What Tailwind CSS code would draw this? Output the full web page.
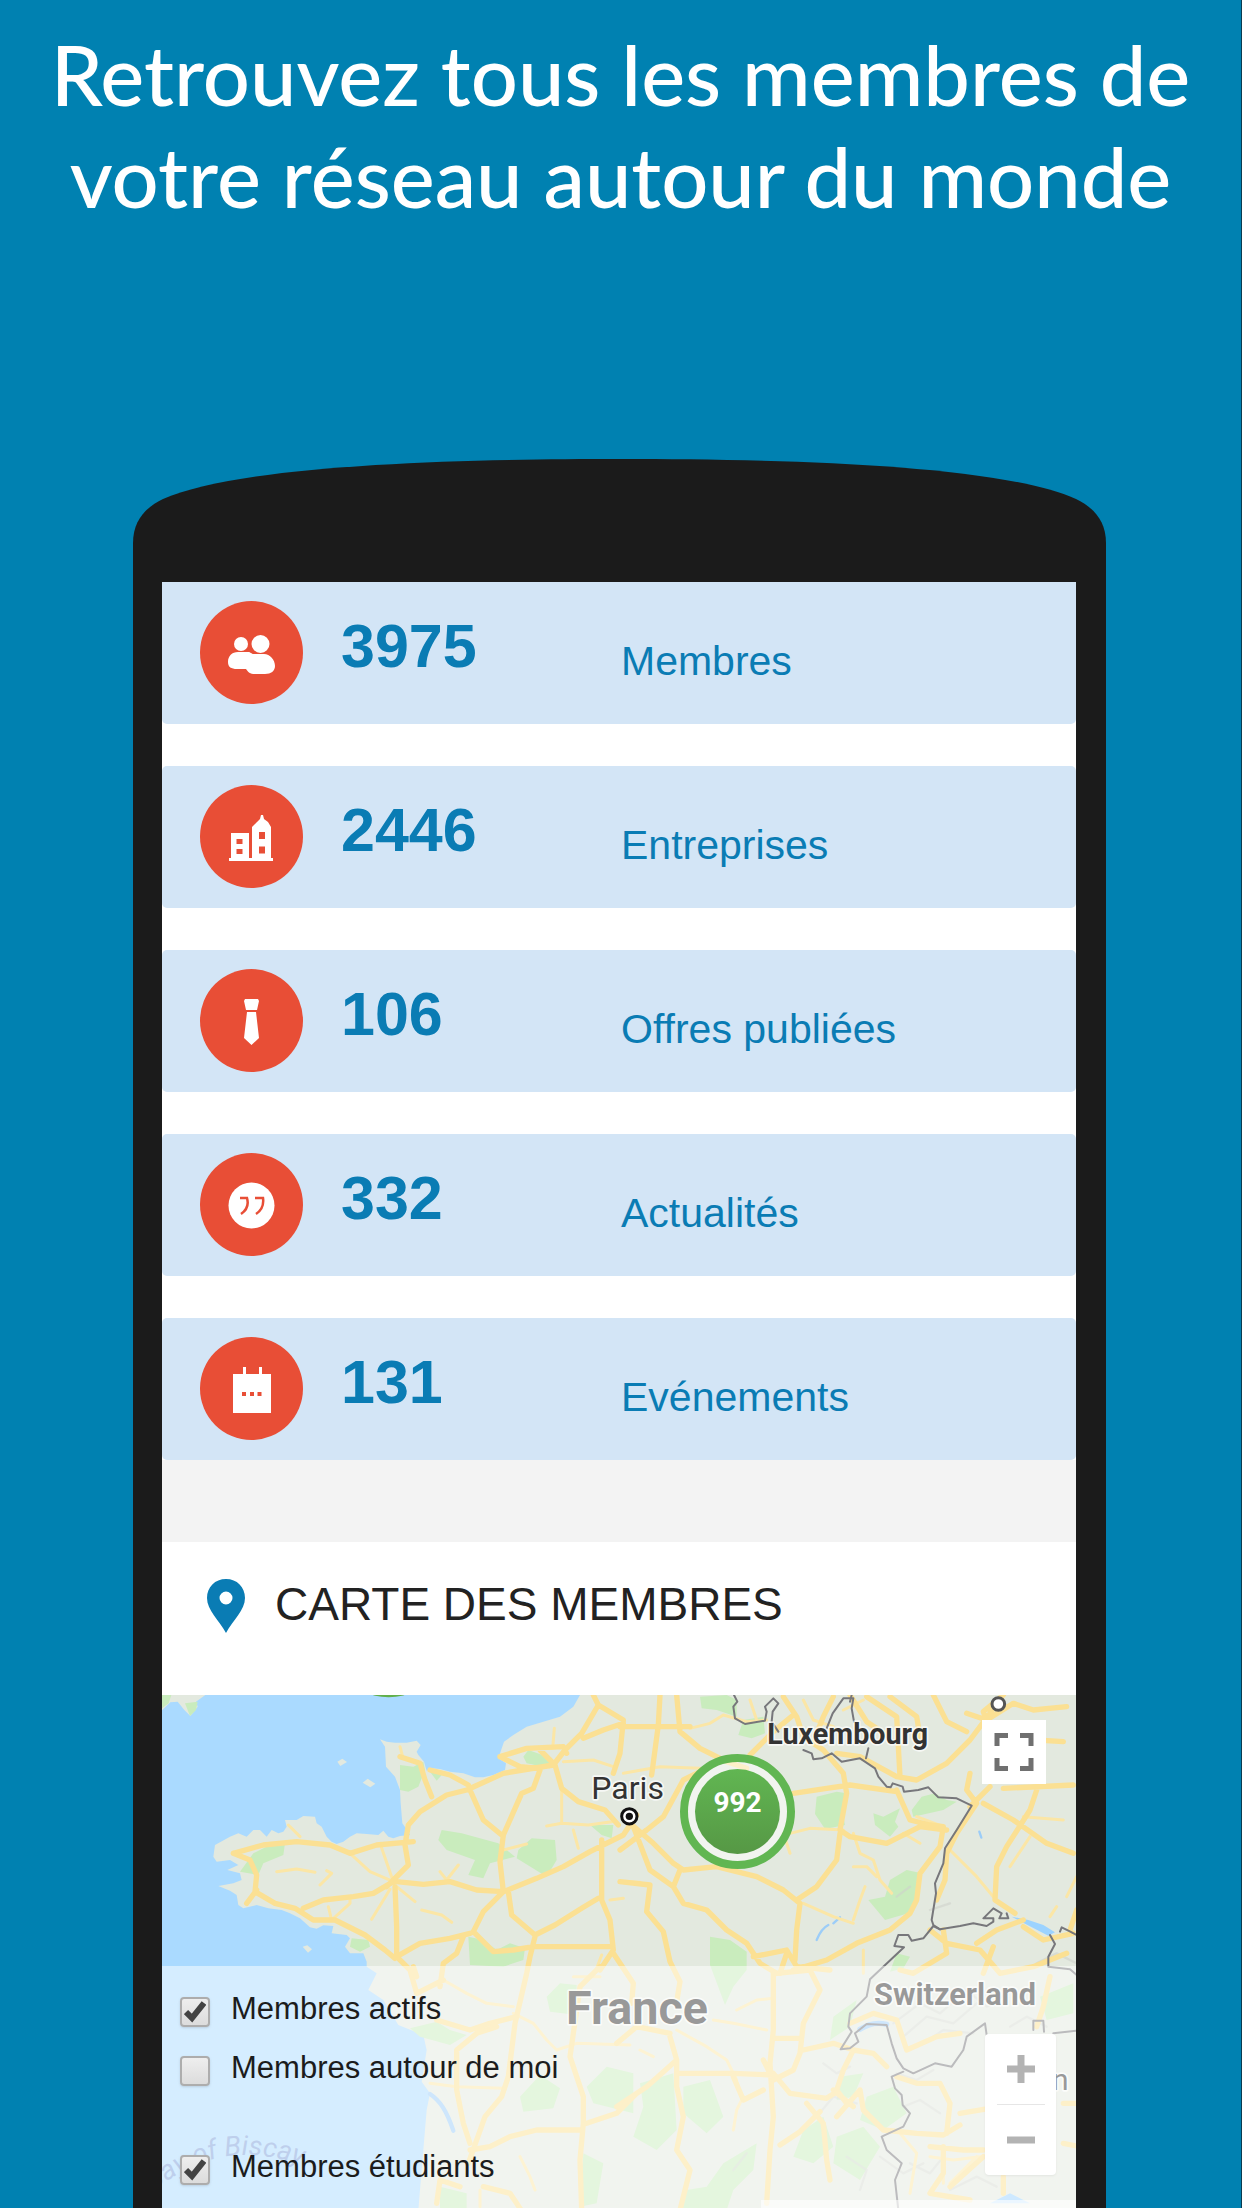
<!DOCTYPE html>
<html lang="fr">
<head>
<meta charset="utf-8">
<meta name="viewport" content="width=device-width, initial-scale=1">
<title>Réseau – Carte des membres</title>
<script src="https://cdn.jsdelivr.net/npm/@tailwindcss/browser@4"></script>
</head>
<body class="min-h-screen overflow-x-hidden border-r border-[#0b3c50] bg-[#0081b1] font-['Liberation_Sans',Arial,sans-serif]">
<header class="px-8 pt-[23px]">
  <h1 class="text-center font-['Lato',sans-serif] text-[83px] leading-[102px] font-medium text-white">Retrouvez tous les membres de<br>votre réseau autour du monde</h1>
</header>

<main class="mt-[232px] mr-[135px] ml-[133px]">
  <svg class="block h-[123px] w-full" viewBox="0 0 973 123" preserveAspectRatio="none" aria-hidden="true">
    <path fill="#1b1b1b" d="M0 124V84C0 60 15 47 30 40C110 5 330 0 487 0C645 0 865 5 943 40C958 47 973 60 973 84V124Z"/>
  </svg>
  <div class="bg-[#1b1b1b] pr-[30px] pl-[29px]">
    <div class="bg-white">

      <ul class="flex flex-col gap-[42px] text-[#0a7cb4]">
        <li class="flex h-[142px] items-start rounded-b-[5px] bg-[#d3e5f6] pl-[38px]">
          <svg class="mt-[19px] size-[103px] shrink-0" viewBox="0 0 103 103" aria-hidden="true">
            <circle cx="51.500" cy="51.500" r="51.500" fill="#e84e36"/>
            <g fill="#fff"><circle cx="41" cy="43" r="7"/><circle cx="60.500" cy="43" r="9"/>
            <path d="M38 51h10c3 0 3 2 6 2h10c6 0 11 6 11 12 0 5-4 8-10 8H55c-5 0-7-2-9-5h-9c-6 0-9-2-9-7 0-6 4-10 10-10z"/></g>
          </svg>
          <strong class="ml-[38px] w-[280px] shrink-0 pt-[34px] text-[61px] leading-none font-bold">3975</strong>
          <span class="pt-[59px] text-[41px] leading-none">Membres</span>
        </li>
        <li class="flex h-[142px] items-start rounded-[5px] bg-[#d3e5f6] pl-[38px]">
          <svg class="mt-[19px] size-[103px] shrink-0" viewBox="0 0 103 103" aria-hidden="true">
            <circle cx="51.500" cy="51.500" r="51.500" fill="#e84e36"/>
            <path fill="#fff" d="M29 73h2V48h18v25h3V42l5-5 3-3 1-4h2l1 4 4 3 3 5v31h2v3H29z"/>
            <path fill="#e84e36" d="M36.500 54h6v5h-6zM36.500 64h6v5h-6zM59 47h6v7h-6zM59 61.500h6v7h-6z"/>
          </svg>
          <strong class="ml-[38px] w-[280px] shrink-0 pt-[34px] text-[61px] leading-none font-bold">2446</strong>
          <span class="pt-[59px] text-[41px] leading-none">Entreprises</span>
        </li>
        <li class="flex h-[142px] items-start rounded-[5px] bg-[#d3e5f6] pl-[38px]">
          <svg class="mt-[19px] size-[103px] shrink-0" viewBox="0 0 103 103" aria-hidden="true">
            <circle cx="51.500" cy="51.500" r="51.500" fill="#e84e36"/>
            <path fill="#fff" d="M45 30h13l1 2-2 9H46l-2-9zM47 43h9l3 26-7.500 7-7.500-7z"/>
          </svg>
          <strong class="ml-[38px] w-[280px] shrink-0 pt-[34px] text-[61px] leading-none font-bold">106</strong>
          <span class="pt-[59px] text-[41px] leading-none">Offres publiées</span>
        </li>
        <li class="flex h-[142px] items-start rounded-[5px] bg-[#d3e5f6] pl-[38px]">
          <svg class="mt-[19px] size-[103px] shrink-0" viewBox="0 0 103 103" aria-hidden="true">
            <circle cx="51.500" cy="51.500" r="51.500" fill="#e84e36"/>
            <circle cx="51.500" cy="52.500" r="23" fill="#fff"/>
            <path fill="none" stroke="#e84e36" stroke-width="2.500" d="M40 45h7c2 7 0 12-6 16M55 45h8c1 7-1 12-7 16"/>
          </svg>
          <strong class="ml-[38px] w-[280px] shrink-0 pt-[34px] text-[61px] leading-none font-bold">332</strong>
          <span class="pt-[59px] text-[41px] leading-none">Actualités</span>
        </li>
        <li class="flex h-[142px] items-start rounded-[5px] bg-[#d3e5f6] pl-[38px]">
          <svg class="mt-[19px] size-[103px] shrink-0" viewBox="0 0 103 103" aria-hidden="true">
            <circle cx="51.500" cy="51.500" r="51.500" fill="#e84e36"/>
            <path fill="#fff" d="M33 37h10v-7h3v7h13v-7h3v7h9v39H33z"/>
            <path fill="#e84e36" d="M42 55h4v4h-4zM50 55h4v4h-4zM57.500 55h4v4h-4z"/>
          </svg>
          <strong class="ml-[38px] w-[280px] shrink-0 pt-[34px] text-[61px] leading-none font-bold">131</strong>
          <span class="pt-[59px] text-[41px] leading-none">Evénements</span>
        </li>
      </ul>

      <div class="h-[82px] bg-[#f3f3f3]"></div>

      <div class="flex h-[153px] items-start pt-[37px] pl-[45px]">
        <svg class="h-[54px] w-[38px] shrink-0" viewBox="0 0 38 54" aria-hidden="true">
          <path fill="#0a7cb4" fill-rule="evenodd" d="M19 0C8 0 0 8 0 19c0 12 12 22 19 35 7-13 19-23 19-35C38 8 30 0 19 0zm0 12.500a6.500 6.500 0 1 1 0 13 6.500 6.500 0 0 1 0-13z"/>
        </svg>
        <h2 class="ml-[30px] pt-[2px] text-[46px] leading-none text-[#222]">CARTE DES MEMBRES</h2>
      </div>

      <section class="relative h-[513px] overflow-hidden bg-[#aadaff]" aria-label="Carte des membres">
        <svg class="absolute inset-0 h-full w-full" viewBox="0 0 2742 1539" preserveAspectRatio="xMidYMin slice" aria-hidden="true">
          <g transform="translate(-36 -15)" stroke-linejoin="round" stroke-linecap="round">
            <!-- land -->
            <path fill="#e3e9df" d="M1290 15 1270 50 1230 80 1180 95 1130 110 1090 135 1062 155 1045 205 1068 220 1065 240 1030 255 1000 262 975 262 940 250 900 245 870 237 845 235 830 242 822 215 805 195 800 185 812 165 800 152 770 158 735 158 710 155 690 148 705 170 708 230 735 260 750 300 752 340 757 400 775 425 780 435 750 438 730 445 715 440 700 422 685 435 650 432 620 430 600 440 580 455 560 462 545 455 530 440 515 410 500 400 495 380 460 378 440 390 405 390 410 410 400 425 385 430 365 420 350 440 330 420 310 420 290 440 265 430 240 440 195 465 190 500 200 515 240 510 265 525 232 540 270 550 275 570 250 580 205 588 240 602 260 615 265 645 280 655 320 645 355 655 395 660 420 670 450 685 480 712 500 716 520 706 550 708 545 730 590 735 600 745 585 770 600 790 640 790 650 815 650 830 680 850 655 900 700 930 745 1005 820 1035 830 1080 815 1175 840 1210 830 1260 820 1380 805 1560H2900V0H1290z"/>
            <path fill="#e3e9df" d="M36 15h130l-28 20 5 15-22 28-18-18-20-25-22 2-25 24zM562 215l15-9 14 10-20 12zM638 278l15-12 23 15-15 11zM458 770l14-4 14 12-12 10z"/>
            <!-- vegetation -->
            <g fill="#c9ecbd">
              <path d="M36 15h28l-8 25-20 15zM105 40l38-5-5 25-18 18zM750 225l40 5 30-15 5 25-20 50-30 15-25-5zM1135 180l70 25-5 30-70-15-10-20zM875 420l60 10 110 30 50 40-75 20-20 45-45-10 20-45-85-30-25-30zM1105 480l40-35 70 5 5 60-30 50-90-55zM310 490l60-30h35l-5 35-60 25-15 35-55-10zM605 745l50 5 5 20-30 15-30-15zM955 740l45 10 40 30 40-20 45 15-5 35-60 20-100-5zM1320 405h70l-5 40-30-10zM840 245l40 5-20 22z"/>
              <path d="M1650 20l80-5 30 15v50l-60-20-45-5zM1780 90l60-10 5 50-40 15-40-10zM2000 320l60-15 30 5-10 70 5 25-60 12-30-45zM2285 360l30-40 40-10 35 20 30 5-40 25-90 20zM2170 370l30 10 50-25-15 40 10 15-25 30-45-35zM2220 570l50-30 45 10-15 65-25 55-70 20-50-60 50-10zM1680 740l60 10 50 35v55l-40 50-25 55-45-120zM2240 790l40 10-20 35-40 10z"/>
              <path d="M780 1015l80-20 40 25 50 15-50 30-90-25zM1190 920l40-40 50 5v90l-80-10zM1110 1220l60-65 60 40-20 60-90 10zM1310 1190l60-60 80 20v120l-120-30zM870 1490l80 20v45h-80zM1300 1390l60 30-20 120-50 10z"/>
              <path d="M1470 1180l100-30 10 170-60 60-70-40 30-90zM1600 1190l80-20 40 110-50 50-70-60zM2050 980l70-50-20 80-60 40zM1960 1320l60-40 30 90-60 50-60-20zM2060 1340l80-30 50 60-60 100-80-50zM2150 1220l80-30 40 80-70 50-70-30zM1720 1420l100-60-10 80-60 60-20 60h-140l20-60 60-10zM2670 920l100-40v90l-80 20zM2070 1160l70-10-30 70-50 10z"/>
            </g>
            <!-- relief -->
            <g fill="none" stroke="#cfd2cc" stroke-width="7" opacity=".6">
              <path d="M2230 1000l80-60 60 30 80-70 60 50 60-40M2260 1040l70-60 80 20 70-60M2320 1060l60-40 90 10M2000 1280l50-60 70 20M2090 1400l60 40-20 60M2190 1400l70 50 60-30M2240 1150l60 20 50-30M2260 1250l50-20 60 40M1750 1440l40-50M2580 1010l50-30 60 30M2400 1500l80-40 60 30M2280 1420l60 30 40-50M2100 1130l-40 20-40-30M2660 820l60-30 60 30M2240 620l40-30M2340 660l60-20"/>
            </g>
            <!-- water -->
            <g fill="none" stroke="#9ccdf8" stroke-width="7"><path d="M840 1212c30 20 50 50 70 110" stroke-width="13"/><path d="M2000 750c10-25 25-40 35-45M2050 700l20-18M2488 425l6 18"/><path d="M2130 1018c30-20 60-20 80-15" stroke-width="16"/></g>
            <path fill="#9cd3ff" d="M2585 680l50 10 45 15 35 22-20 10-35-18zM2520 1540l60-30 60 30z"/>
            <!-- minor roads -->
            <g fill="none" stroke="#fbe6a6" stroke-width="9">
              <path d="M1213 115l-5 60M1240 215l90-5 60 20M1235 290v110l-45 8M1235 400l80 5 70-10M1270 420l15 55M1060 480l70-18M870 545l20 25 35-45M380 545l60-8 55 10M510 585l35-35-15-8M815 660l60 15 30 22M690 460l40 115M600 490l60 55 70 30M535 650l10 40 55-50v-15M1410 575l60 2M1380 630l40-5M665 688l55-90M740 590l55 45M415 405l35 35M1340 835l15-40M750 170l8 30 45 20"/>
              <path d="M1420 250l110-20 120 5M1620 115l60-15 40-25 70 20 60-5M1800 30l20 60M1960 30l30 60 60 20M1900 430l20 60M1920 430l60-15 100 5M2110 430l20 60 40 20 20 60 35 40M2180 560l-30-30-40 0M1960 640l90 40 60 20M2110 690l20-60 15-40M2260 430l50 30M2400 480l80 80 50 60M2580 530l60-90M2620 380l120 10M2750 620l30-60M2080 60l60-30M2300 380l80 30M2700 680l20-30"/>
              <path d="M880 870l70 40 60 30 80 10M1090 970l60 30 40 50 30 30 60-20 160 5M840 1180l80 10 140 5M1110 1400l30 60 15 40M990 1500v50M1270 860l80 0M1690 990l60 10 100 20M1760 960l60-30 50-5M1580 1020l90 50 60 40 30 60M1510 1100l-40-20M2140 850v-70M1750 1320l10-60 20-40M2250 1330l50 60-20 120M2340 1400l70 10 80-10M2380 1400v80M2480 1400l-80 80"/>
            </g>
            <!-- main roads -->
            <g fill="none" stroke="#fbe093" stroke-width="16">
              <path d="M1330 15l15 30 75 45-10 100-20 60M1345 45l-50 85-50 50-35 45-150 25-110 50-60 15-80 50-35 40-10 60 10 60-65 65M1420 100l-60 20-60 25M1050 200l80-25 110-5 10 20M1050 200l60 30 60 5M1170 180l45 45 20 70 50 40 80 25 40 45M1170 240l-20 55-35 15-55 125-10 80 10 90M960 300l40 90 55 45M840 240l60 15 55 30M750 200l60 20 15 50 20 50M250 490l90-25 100-10 100 10 60 25 80-25 110-10M250 490l50 20 20 45-5 50 60 35 60 15 55 35h65l90 45 60 45 30 25M290 640l30-40M730 575l-60 35-60 10-90 10-60 25M740 575l80 8 80-8 80 25 80 5 100-40 80-35 80-45 100-50 40-60M735 590l5 120v90M740 800l70-40 90-15 60-15M1060 605l-60 60-30 60 60 60 60-5 60-10 235 0M1075 605l10 70 70 60 60-30 80-50 50-30M1355 450v180l25 60 10 90-40 60M1155 740l-15 60-10 50-35 150-20 160-20 60-50 60-50 140M940 740l-20 50-40 30-10 70M740 800l40 40 20 70 80-40M1390 790l40 60 20 30-5 60"/>
              <path d="M1410 110h210M1530 15l-5 90-20 150M1580 15l10 110 60 50 80 40 60 20M1410 480l80-60 50-40 60-110 80-40M1450 410l50 130 70 50 30 50 70 20 60 60 60 40 40 60 50 30M1410 575l90 10-10 80 50 60 20 90 30 60-10 60M1440 400l70 60 60 60 30 20 100-10 120 30 80 40 50 40-10 80-5 90M1590 540l-20 50M1800 195l70-70 60-50M1930 310l100-15 70-10 140 20M1900 20l40 60 20 60 60 40 60 70 10 60-20 110 30 20 110 20 100-50 80 10M2070 430l-10 80-60 80-60 40M2060 190l70 10 110 60 60 10 90-50 70-70 60-80 40-60M2050 20l-30 60-20 50M2150 20l90 60 10 180M2100 15l50 80 60 40M2220 20l80 60 10 60M2350 15l40 80 60 30M2560 15l-60 50 20 60 60 20 160 10M2450 70l60 20 80-50 60 20 100-10M2460 250l-10 50 30 40-60 90-30 60-5 80-25 60M2240 300l40 90 60 15 40 5-10 60-60 80-10 80-20 40-60 50-100 40-90 50-100 30M2500 340l90 50 100 70 80 30M2520 290l-60 60M2660 300l-20 60-70 110-30 60-5 100 60 40M2560 295l210-10M2340 720l50 40 100 20 60 70 100-20 100-40M2380 720l10 70-100 60-40-10M2480 760l60-40 80-30M2500 850l30-80M2780 660l-20 60M1810 800l100-20 30 50 100 10M1910 790l-20 60M2620 710l60 40 90-20"/>
              <path d="M1560 1030l-100-20-60 50M1560 1040l20 70 0 80 20 90-20 100 40 60-30 120M1400 1250l90-60 90-80M1590 1150h160l120 5M1870 850l0 170-10 100 10 160-10 100-10 160M1880 850l100-10 30 60-50 100-10 90-20 50-60 30-30-60M1870 1045h80M1870 1150l50 60 110 15 30-20M1960 1080l90-20 60 20 60 10 40 40M2110 1080l-30 60-20 60 30 40M2110 1250l-60-50M1970 1240l50 60 10 110 10 60M1890 1365l60-40 60-60M2060 1280l70-80M2130 1200l10 60 60 60 100 10 80 5 50-30M2100 1000l70-30 70 20 30 90 90-40 70-10M2240 1160l60 20 70 0 30 60-10 90M2340 1370l100 10 60 0M2380 1370v80l-40 60 120 20M2430 1270l120-20M2500 1400l-100 90M2560 1460v50M2700 860l-20 90-20 60M2780 1240l-40 0M2740 1360l50 10M1750 1160l30 70 60-30M1040 1010l-60 20-60 50v120l20 100 20 60M960 1380l60-10 60-30 80-20h130M1270 1030l-10 70 40 120 0 80-10 110 5 150M1350 830l-60 60-20 140M1310 1300l90-30 60-60M930 1490l-60-20-10 70M1000 1490l80 20 40 60M800 860l-10-30M860 990l100 30 60-20 80-20"/>
            </g>
            <!-- borders -->
            <g fill="none" stroke="#77777b" stroke-width="6">
              <path d="M1752 15L1762 35 1750 50 1755 85 1785 102 1845 92 1850 65 1845 50 1870 25 1885 40 1868 65 1865 95 1885 125M2030 115L2048 70 2080 25 2110 25 2105 55 2112 95M2105 15L2100 35M2155 175L2148 205"/>
              <path d="M1960 180L1985 190 1990 208 2015 205 2045 190 2075 215 2130 205 2175 235 2185 260 2210 290 2222 292 2228 280 2258 290 2262 305 2305 300 2335 292 2365 322 2420 325 2465 347 2420 420 2385 475 2380 520 2355 580 2358 610 2345 690 2350 705 2370 718 2430 708 2470 700 2510 708 2530 695 2530 685 2500 685 2530 655 2555 670 2548 685 2575 685 2570 670"/>
              <path d="M2370 718L2350 708 2320 745 2285 752 2275 735 2245 735 2233 768 2262 772 2160 868 2150 920 2100 970 2095 1010 2105 1025 2072 1078 2100 1075 2125 1055 2115 1030 2150 1002 2210 1005 2225 1060 2240 1105 2260 1135 2290 1150 2355 1120 2405 1130 2440 1080 2450 1040 2505 1000 2510 1035"/>
              <path d="M2260 1145L2225 1160 2235 1195 2255 1215 2258 1245 2280 1270 2260 1310 2195 1340 2210 1380 2255 1420 2235 1470 2245 1560M2730 725L2735 712 2755 722 2780 735M2700 735L2715 762 2695 800 2695 830 2760 838 2780 855M2650 1020L2650 992 2680 992 2682 1025M2710 1030L2780 1022"/>
            </g>
            <!-- towns -->
            <circle cx="1438" cy="379" r="23" fill="#fff" stroke="#111" stroke-width="9"/><circle cx="1438" cy="379" r="11" fill="#111"/>
            <circle cx="2545" cy="42" r="19" fill="#fff" stroke="#555" stroke-width="9"/>
            <ellipse cx="716" cy="7" rx="56" ry="15" fill="#61b04c"/>
            <!-- labels -->
            <g font-family="Roboto, sans-serif" paint-order="stroke" stroke="#fff" stroke-opacity=".7" stroke-width="10" fill="#333">
              <text x="1324" y="328" font-size="96">Paris</text>
              <text x="1852" y="163" font-size="86" font-weight="700">Luxembourg</text>
              <text x="1248" y="1002" font-size="140" font-weight="700">France</text>
              <text x="2172" y="944" font-size="92" font-weight="700">Switzerland</text>
              <text x="2706" y="1200" font-size="90">n</text>
            </g>
            <path id="bay" fill="none" d="M10 1505Q240 1310 530 1460"/>
            <text font-family="Roboto, sans-serif" font-size="82" font-style="italic" fill="#7d9fd8"><textPath href="#bay">Bay of Biscay</textPath></text>
          </g>
        </svg>

        <button type="button" aria-label="992 membres" class="absolute top-[59px] left-[518px] flex size-[115px] items-center justify-center rounded-full border-8 border-[#61b652] bg-white/50 p-[7px]">
          <span class="flex size-full justify-center rounded-full bg-linear-to-b from-[#61b652] to-[#569845] pt-[14px] font-['Roboto',sans-serif] text-[28px] leading-10 font-bold text-white">992</span>
        </button>

        <button type="button" aria-label="Plein écran" class="absolute top-[25px] right-[30px] flex size-16 items-center justify-center bg-white">
          <svg class="size-10" viewBox="0 0 40 40" fill="none" stroke="#707070" stroke-width="5" aria-hidden="true"><path d="M3 14V3.500h11M26 3.500h11V14M37 26v10.500H26M14 36.500H3V26"/></svg>
        </button>

        <div class="absolute top-[339px] right-5 flex h-[141px] w-[71px] flex-col items-center rounded bg-white shadow">
          <button type="button" aria-label="Zoom avant" class="flex w-full flex-1 items-center justify-center">
            <svg class="size-7" viewBox="0 0 28 28" fill="none" stroke="#666" stroke-width="7" aria-hidden="true"><path d="M14 0v28M0 14h28"/></svg>
          </button>
          <div class="h-px w-12 bg-[#ccc]"></div>
          <button type="button" aria-label="Zoom arrière" class="flex w-full flex-1 items-center justify-center">
            <svg class="size-7" viewBox="0 0 28 28" fill="none" stroke="#666" stroke-width="7" aria-hidden="true"><path d="M0 14h28"/></svg>
          </button>
        </div>

        <div class="absolute right-0 bottom-0 h-2 w-[315px] bg-white/60"></div>

        <form class="pointer-events-none absolute inset-x-0 top-[271px] bottom-0 flex flex-col items-start bg-white/50 pt-[31px] pl-[18px] text-[31px] leading-6 text-[#1c1c1c]">
          <label class="pointer-events-auto relative flex h-[30px] items-start gap-[21px]">
            <input type="checkbox" checked class="peer size-[30px] appearance-none rounded-[4px] border-2 border-[#adadad] bg-linear-to-b from-[#eee] to-[#dcdcdc] shadow-sm">
            <svg class="absolute top-1 left-1 hidden size-[22px] peer-checked:block" viewBox="0 0 22 22" fill="none" stroke="#444" stroke-width="6" aria-hidden="true"><path d="M2 11l6 6L20 2"/></svg>
            Membres actifs
          </label>
          <label class="pointer-events-auto relative mt-[29px] flex h-[30px] items-start gap-[21px]">
            <input type="checkbox" class="peer size-[30px] appearance-none rounded-[4px] border-2 border-[#adadad] bg-linear-to-b from-[#eee] to-[#dcdcdc] shadow-sm">
            <svg class="absolute top-1 left-1 hidden size-[22px] peer-checked:block" viewBox="0 0 22 22" fill="none" stroke="#444" stroke-width="6" aria-hidden="true"><path d="M2 11l6 6L20 2"/></svg>
            Membres autour de moi
          </label>
          <label class="pointer-events-auto relative mt-[69px] flex h-[30px] items-start gap-[21px]">
            <input type="checkbox" checked class="peer size-[30px] appearance-none rounded-[4px] border-2 border-[#adadad] bg-linear-to-b from-[#eee] to-[#dcdcdc] shadow-sm">
            <svg class="absolute top-1 left-1 hidden size-[22px] peer-checked:block" viewBox="0 0 22 22" fill="none" stroke="#444" stroke-width="6" aria-hidden="true"><path d="M2 11l6 6L20 2"/></svg>
            Membres étudiants
          </label>
        </form>
      </section>
    </div>
  </div>
</main>
</body>
</html>
